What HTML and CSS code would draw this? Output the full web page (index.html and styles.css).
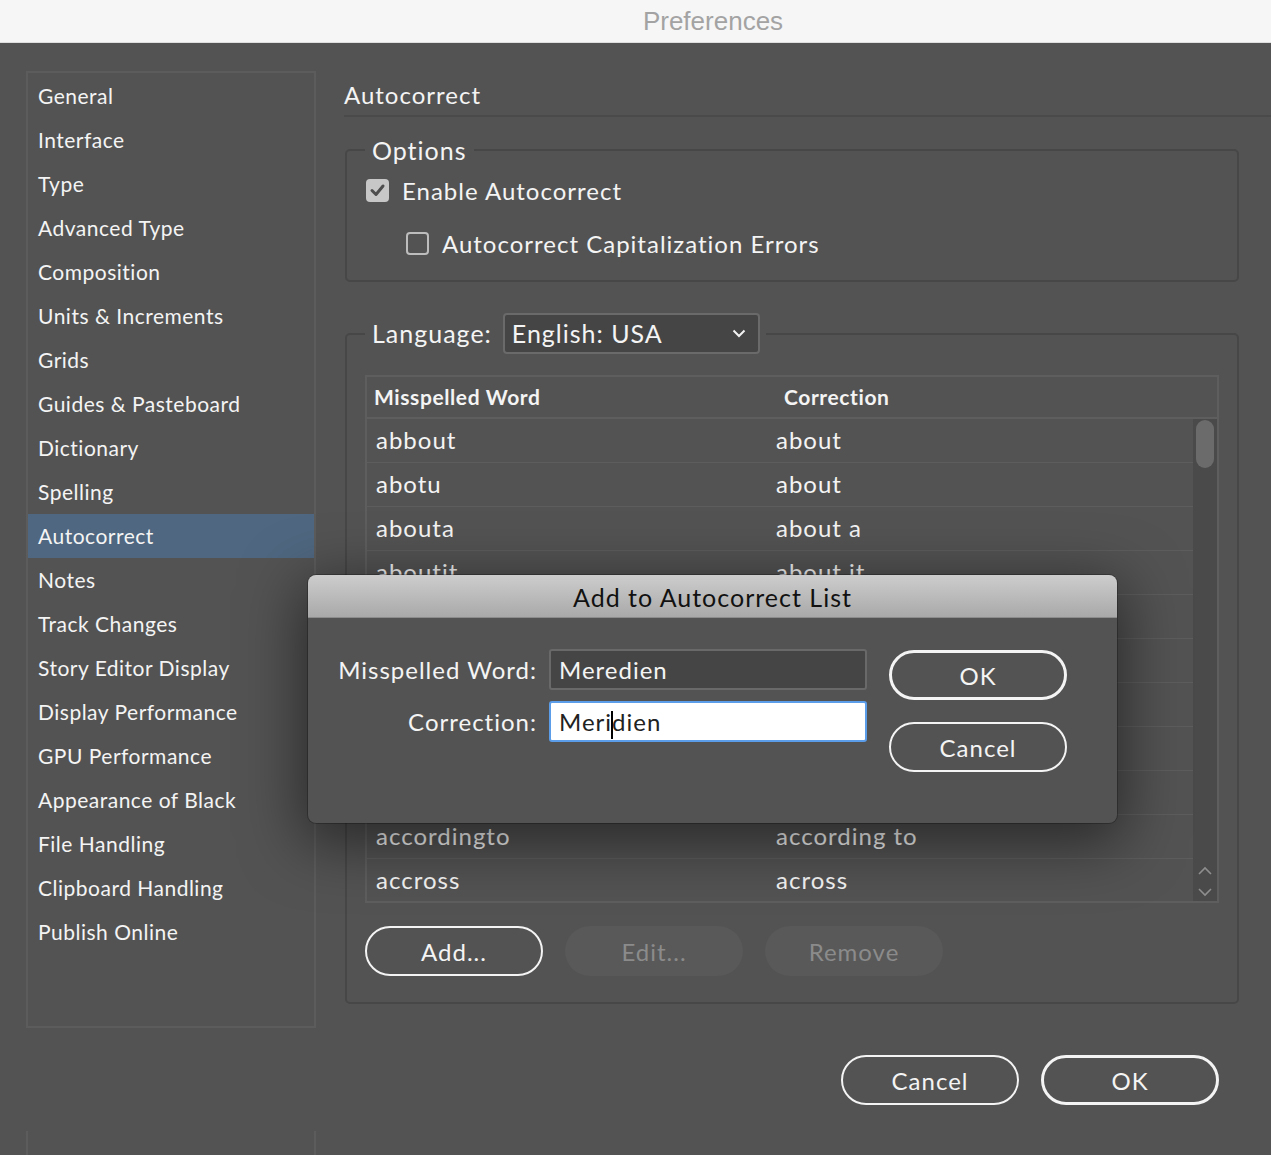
FILE: index.html
```html
<!DOCTYPE html>
<html>
  <head>
    <title>Preferences</title>
    <link rel="stylesheet" href="styles.css">
  </head>
  <body>
    <div class="title-bar">Preferences</div>

    <div class="window">
      <div class="side-column">
        <ul class="nav-list">
          <li>General</li>
          <li>Interface</li>
          <li>Type</li>
          <li>Advanced Type</li>
          <li>Composition</li>
          <li>Units &amp; Increments</li>
          <li>Grids</li>
          <li>Guides &amp; Pasteboard</li>
          <li>Dictionary</li>
          <li>Spelling</li>
          <li class="selected">Autocorrect</li>
          <li>Notes</li>
          <li>Track Changes</li>
          <li>Story Editor Display</li>
          <li>Display Performance</li>
          <li>GPU Performance</li>
          <li>Appearance of Black</li>
          <li>File Handling</li>
          <li>Clipboard Handling</li>
          <li>Publish Online</li>
        </ul>
        <div class="nav-list-next"></div>
      </div>

      <div class="content">
        <div class="section-title">Autocorrect</div>

        <fieldset class="group options-group">
          <legend class="group-label">Options</legend>
          <div class="check-row">
            <span class="checkbox checked">
              <svg width="23" height="23" viewBox="0 0 23 23">
                <polyline points="6,11.5 10,15.5 17,7" fill="none" stroke="#4d4d4d" stroke-width="3" stroke-linecap="round" stroke-linejoin="round"/>
              </svg>
            </span>
            Enable Autocorrect
          </div>
          <div class="check-row indented">
            <span class="checkbox"></span>
            Autocorrect Capitalization Errors
          </div>
        </fieldset>

        <fieldset class="group language-group">
          <legend class="group-label language-legend">
            <span>Language:</span>
            <span class="select-box">
              English: USA
              <svg width="14" height="9" viewBox="0 0 14 9">
                <polyline points="1.5,1.5 7,7 12.5,1.5" fill="none" stroke="#f2f2f2" stroke-width="2"/>
              </svg>
            </span>
          </legend>

          <div class="word-table">
            <div class="table-head">
              <div class="head-word">Misspelled Word</div>
              <div class="head-fix">Correction</div>
            </div>
            <div class="table-body">
              <div class="rows">
                <div class="row"><span class="cell-word">abbout</span><span class="cell-fix">about</span></div>
                <div class="row"><span class="cell-word">abotu</span><span class="cell-fix">about</span></div>
                <div class="row"><span class="cell-word">abouta</span><span class="cell-fix">about a</span></div>
                <div class="row"><span class="cell-word">aboutit</span><span class="cell-fix">about it</span></div>
                <div class="row"><span class="cell-word">aboutthe</span><span class="cell-fix">about the</span></div>
                <div class="row"><span class="cell-word">abscence</span><span class="cell-fix">absence</span></div>
                <div class="row"><span class="cell-word">accesories</span><span class="cell-fix">accessories</span></div>
                <div class="row"><span class="cell-word">accidant</span><span class="cell-fix">accident</span></div>
                <div class="row"><span class="cell-word">accomodate</span><span class="cell-fix">accommodate</span></div>
                <div class="row"><span class="cell-word">accordingto</span><span class="cell-fix">according to</span></div>
                <div class="row"><span class="cell-word">accross</span><span class="cell-fix">across</span></div>
              </div>
              <div class="scrollbar">
                <div class="scroll-thumb"></div>
                <div class="scroll-arrows">
                  <svg width="16" height="34" viewBox="0 0 16 34">
                    <polyline points="2,9 8,3 14,9" fill="none" stroke="#8e8e8e" stroke-width="1.6"/>
                    <polyline points="2,24 8,30 14,24" fill="none" stroke="#8e8e8e" stroke-width="1.6"/>
                  </svg>
                </div>
              </div>
            </div>
          </div>

          <div class="list-buttons">
            <button class="pill-button">Add...</button>
            <button class="pill-button disabled">Edit...</button>
            <button class="pill-button disabled">Remove</button>
          </div>
        </fieldset>

        <div class="dialog-buttons">
          <button class="pill-button">Cancel</button>
          <button class="pill-button default">OK</button>
        </div>
      </div>
    </div>

    <div class="modal">
      <div class="modal-title">Add to Autocorrect List</div>
      <div class="modal-body">
        <div class="modal-form">
          <div class="field-label">Misspelled Word:</div>
          <div class="text-field">Meredien</div>
          <div class="field-label">Correction:</div>
          <div class="text-field focused">Meri<span class="caret"></span>dien</div>
        </div>
        <div class="modal-buttons">
          <button class="pill-button default">OK</button>
          <button class="pill-button">Cancel</button>
        </div>
      </div>
    </div>
  </body>
</html>
```

FILE: styles.css
```css
body {
  margin: 0;
  height: 1155px;
  overflow: hidden;
  background-color: #535353;
  color: #f4f4f4;
  font-family: Lato, "Open Sans", sans-serif;
  letter-spacing: 1px;
}
.title-bar {
  height: 42px;
  line-height: 42px;
  background-color: #f6f6f6;
  border-bottom: 1px solid #dedede;
  color: #a3a3a3;
  font-family: "Liberation Sans", Arial, sans-serif;
  font-size: 26px;
  letter-spacing: normal;
  text-align: center;
  padding-left: 155px;
}
.window {
  display: flex;
  padding: 28px 0 0 26px;
}
.side-column {
  width: 290px;
  margin-right: 28px;
}
.nav-list {
  list-style: none;
  margin: 0;
  padding: 1px 0 0 0;
  height: 952px;
  border: 2px solid #5c5c5c;
}
.nav-list li {
  height: 44px;
  line-height: 43px;
  padding-left: 10px;
  font-size: 21px;
  letter-spacing: 0.5px;
}
.nav-list li.selected {
  background-color: #4f6780;
}
.nav-list-next {
  margin-top: 103px;
  height: 30px;
  border-left: 2px solid #5c5c5c;
  border-right: 2px solid #5c5c5c;
}
.content {
  width: 895px;
}
.section-title {
  font-size: 24px;
  line-height: 30px;
  padding: 9px 0 5px 0;
  border-bottom: 2px solid #4a4a4a;
  width: 927px;
}
.group {
  margin: 0 0 0 1px;
  border: 2px solid #474747;
  border-radius: 5px;
  padding: 0 18px;
  min-width: 0;
}
.group-label {
  padding: 0 7px;
  line-height: 30px;
  font-size: 25px;
}
.options-group {
  margin-top: 18px;
  padding-top: 10px;
  padding-bottom: 22px;
}
.check-row {
  display: flex;
  align-items: center;
  height: 30px;
  font-size: 24px;
}
.check-row.indented {
  margin-top: 23px;
  padding-left: 40px;
}
.checkbox {
  width: 23px;
  height: 23px;
  box-sizing: border-box;
  margin: 0 13px 0 1px;
  border: 2px solid #bdbdbd;
  border-radius: 4px;
}
.checkbox.checked {
  border: none;
  background-color: #c7c7c7;
}
.checkbox svg {
  display: block;
}
.language-group {
  margin-top: 31px;
  padding-top: 21px;
  padding-bottom: 26px;
}
.language-legend {
  display: flex;
  align-items: center;
  padding: 0 6px 0 7px;
  line-height: 41px;
}
.select-box {
  display: flex;
  align-items: center;
  justify-content: space-between;
  width: 257px;
  height: 41px;
  box-sizing: border-box;
  margin-left: 11px;
  padding: 0 12px 0 7px;
  background-color: #454545;
  border: 2px solid #6a6a6a;
  border-radius: 4px;
  font-size: 25px;
}
.word-table {
  border: 2px solid #5e5e5e;
  height: 524px;
  overflow: hidden;
}
.table-head {
  display: flex;
  height: 40px;
  line-height: 40px;
  border-bottom: 2px solid #5e5e5e;
  font-size: 21px;
  font-weight: bold;
  letter-spacing: 0.6px;
}
.head-word {
  width: 400px;
  padding-left: 7px;
}
.head-fix {
  padding-left: 10px;
}
.table-body {
  display: flex;
  height: 482px;
}
.rows {
  flex: 1;
}
.row {
  display: flex;
  height: 43px;
  line-height: 42px;
  border-bottom: 1px solid #5d5d5d;
  font-size: 24px;
}
.cell-word {
  width: 400px;
  padding-left: 9px;
}
.scrollbar {
  width: 24px;
  background-color: #4a4a4a;
  display: flex;
  flex-direction: column;
  justify-content: space-between;
  align-items: center;
}
.scroll-thumb {
  width: 18px;
  height: 48px;
  margin-top: 1px;
  border-radius: 9px;
  background-color: #6b6b6b;
}
.scroll-arrows svg {
  display: block;
  margin-bottom: 2px;
}
.pill-button {
  width: 178px;
  height: 50px;
  box-sizing: border-box;
  border: 2px solid #f4f4f4;
  border-radius: 25px;
  background-color: transparent;
  color: #f4f4f4;
  font-family: Lato, "Open Sans", sans-serif;
  font-size: 24px;
  letter-spacing: 1px;
  padding: 0;
}
.pill-button.default {
  border-width: 3px;
}
.pill-button.disabled {
  border: none;
  background-color: #595959;
  color: #8b8b8b;
}
.list-buttons {
  display: flex;
  gap: 22px;
  margin-top: 23px;
}
.dialog-buttons {
  display: flex;
  justify-content: flex-end;
  gap: 22px;
  margin-top: 51px;
  padding-right: 20px;
}
.modal {
  position: absolute;
  left: 308px;
  top: 575px;
  width: 809px;
  height: 248px;
  background-color: #535353;
  border-radius: 8px;
  overflow: hidden;
  box-shadow: 0 14px 60px 6px rgba(0, 0, 0, 0.5), 0 0 0 1px rgba(0, 0, 0, 0.25);
}
.modal-title {
  height: 42px;
  line-height: 44px;
  background: linear-gradient(#cdcdcd, #a9a9a9);
  border-bottom: 1px solid #8c8c8c;
  color: #111;
  font-size: 25px;
  text-align: center;
}
.modal-body {
  display: flex;
  align-items: flex-start;
  padding-top: 31px;
}
.modal-form {
  display: grid;
  grid-template-columns: 229px 318px;
  column-gap: 12px;
  row-gap: 11px;
}
.field-label {
  text-align: right;
  line-height: 41px;
  font-size: 24px;
}
.text-field {
  height: 41px;
  line-height: 37px;
  box-sizing: border-box;
  padding-left: 8px;
  background-color: #454545;
  border: 2px solid #696969;
  border-radius: 3px;
  font-size: 24px;
}
.text-field.focused {
  background-color: #fff;
  border-color: #5b9de8;
  color: #222;
}
.caret {
  display: inline-block;
  width: 2px;
  height: 28px;
  margin: 0 -1px;
  background-color: #000;
  vertical-align: middle;
}
.modal-buttons {
  display: flex;
  flex-direction: column;
  gap: 22px;
  margin: 1px 0 0 22px;
}
```
